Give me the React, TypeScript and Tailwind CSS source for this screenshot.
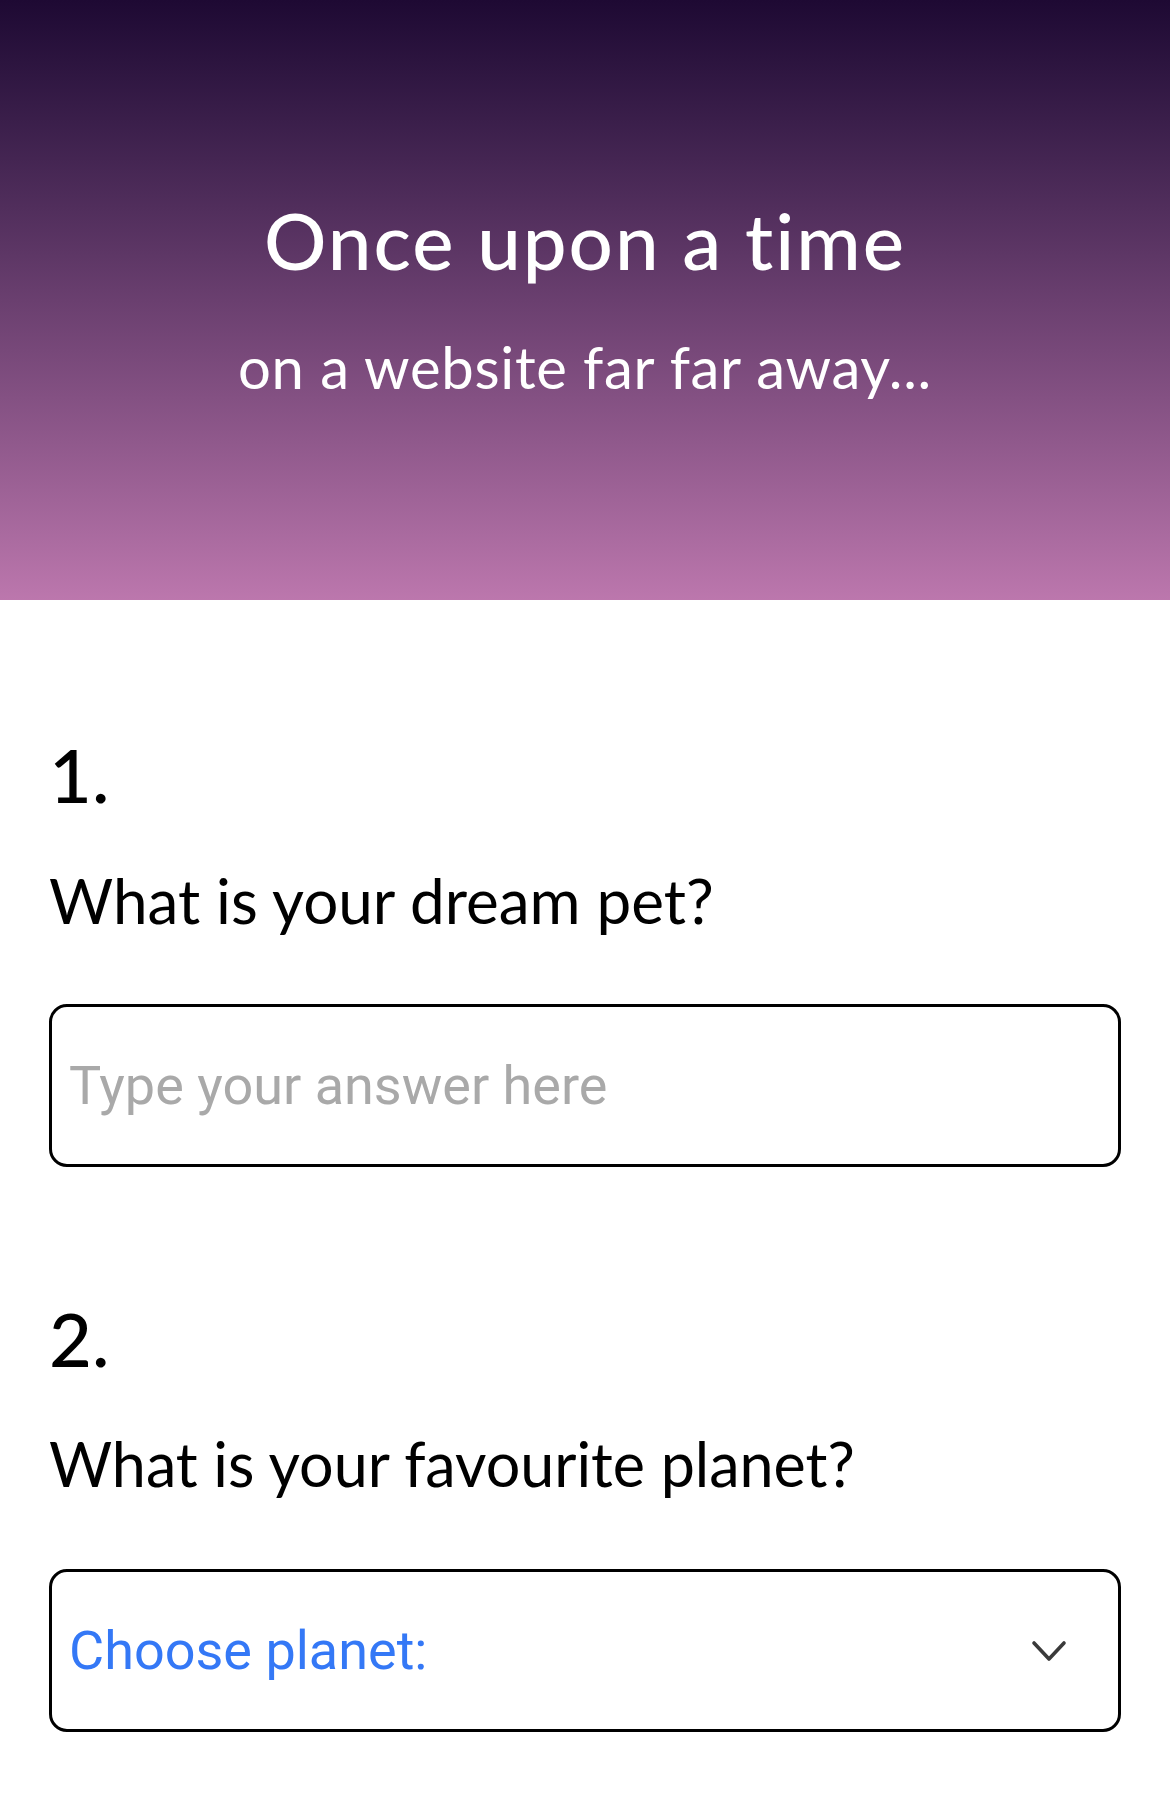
import React from "react";

export default function App() {
  return (
    <div className="min-h-[1816px] w-full bg-white" style={{ fontFamily: "Lato, 'Noto Sans', sans-serif" }}>
      <header className="flex h-[600px] flex-col items-center bg-linear-to-b from-[#1e0933] via-[#6a3f6f] to-[#bc77ad] pt-[190px] text-white">
        <h1 className="text-[78px] font-medium leading-[100px] tracking-[2px]">Once upon a time</h1>
        <p className="mt-[42px] text-[58px] leading-[70px] tracking-[0.7px]">on a website far far away...</p>
      </header>
      <main className="flex flex-col px-[49px] pt-[130px] text-black">
        <section className="flex flex-col">
          <div className="text-[74px] font-medium leading-[90px]">1.</div>
          <label className="mt-[40px] text-[62px] leading-[80px]">What is your dream pet?</label>
          <input
            type="text"
            placeholder="Type your answer here"
            className="mt-[64px] h-[163px] w-full rounded-[18px] border-[3px] border-black bg-white px-[17px] text-[54px] outline-none placeholder:text-[#a9a9a9]"
            style={{ fontFamily: "Roboto, 'Liberation Sans', sans-serif" }}
          />
        </section>
        <section className="mt-[127px] flex flex-col">
          <div className="text-[74px] font-medium leading-[90px]">2.</div>
          <label className="mt-[40px] text-[61px] leading-[80px]">What is your favourite planet?</label>
          <div
            className="relative mt-[65px] flex h-[163px] w-full items-center rounded-[18px] border-[3px] border-black bg-white px-[17px]"
            style={{ fontFamily: "Roboto, 'Liberation Sans', sans-serif" }}
          >
            <span className="text-[54px] text-[#3478f6]">Choose planet:</span>
            <svg className="ml-auto mr-[34px]" width="36" height="22" viewBox="0 0 36 22" fill="none">
              <path d="M3 3 L18 19 L33 3" stroke="#3a3a3a" strokeWidth="3.6" strokeLinecap="round" strokeLinejoin="round" />
            </svg>
          </div>
        </section>
      </main>
    </div>
  );
}
